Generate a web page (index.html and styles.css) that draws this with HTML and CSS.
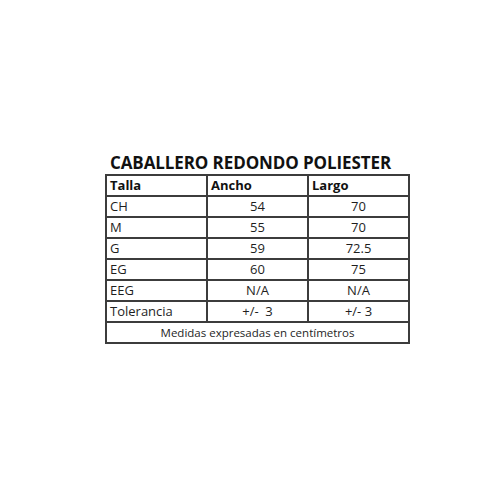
FILE: index.html
```html
<!DOCTYPE html>
<html>
<head>
<meta charset="utf-8">
<link rel="stylesheet" href="styles.css">
</head>
<body>
<div class="sheet">
  <div class="title">CABALLERO REDONDO POLIESTER</div>
  <table class="sizes">
    <tr class="head"><td>Talla</td><td>Ancho</td><td>Largo</td></tr>
    <tr><td>CH</td><td class="num">54</td><td class="num">70</td></tr>
    <tr><td>M</td><td class="num">55</td><td class="num">70</td></tr>
    <tr><td>G</td><td class="num">59</td><td class="num">72.5</td></tr>
    <tr><td>EG</td><td class="num">60</td><td class="num">75</td></tr>
    <tr><td>EEG</td><td class="num">N/A</td><td class="num">N/A</td></tr>
    <tr><td>Tolerancia</td><td class="num">+/-&nbsp; 3</td><td class="num">+/- 3</td></tr>
    <tr><td class="note" colspan="3">Medidas expresadas en centímetros</td></tr>
  </table>
</div>
</body>
</html>
```
FILE: styles.css
```css
html, body {
  margin: 0;
  padding: 0;
  background: #ffffff;
}
body {
  font-family: "Open Sans", "Noto Sans", sans-serif;
  color: #1e1e1e;
}
.sheet {
  padding-top: 152px;
  padding-left: 105px;
}
.title {
  font-weight: 700;
  font-size: 17px;
  line-height: 22px;
  letter-spacing: -0.1px;
  color: #111;
  padding-left: 5px;
}
.sizes {
  border-collapse: collapse;
  table-layout: fixed;
  width: 305px;
}
.sizes td {
  border: 2px solid #3c3c3c;
  padding: 0 0 0 3px;
  height: 19px;
  line-height: 19px;
  font-size: 13px;
  white-space: nowrap;
  overflow: hidden;
}
.sizes .head td {
  font-weight: 700;
  color: #111;
}
.sizes td.num {
  text-align: center;
  padding: 0;
}
.sizes td.note {
  text-align: center;
  font-size: 11.5px;
  padding: 0;
}
```
